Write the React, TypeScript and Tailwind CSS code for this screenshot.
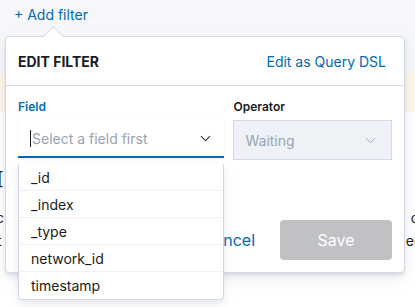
import { ChevronDown } from "lucide-react";

const fields = ["_id", "_index", "_type", "network_id", "timestamp"];

export default function App() {
  return (
    <div
      className="relative h-[307px] w-[415px] overflow-hidden bg-[#fafbfd] text-[14px] text-[#343741]"
      style={{ fontFamily: "Inter, 'Noto Sans', sans-serif" }}
    >
      {/* page behind */}
      <div className="h-[72px] bg-[#f5f7fa] px-[14px] pt-[4px]">
        <span className="text-[#006bb4]">+ Add filter</span>
      </div>
      <div className="h-[40px] bg-[#fef6e6]" />
      <div className="flex h-[195px] justify-between bg-white pt-[56px] text-[#1a1c21]">
        <div className="flex flex-col leading-[22px]">
          <span className="-ml-[3px] text-[18px] text-[#1a1c21]">[</span>
          <span className="-ml-[4px] mt-[17px]">c</span>
          <span className="-ml-[3px] mt-[1px]">t</span>
        </div>
        <div className="-mr-[7px] flex flex-col items-start pt-[39px] leading-[22px]">
          <span className="ml-[5px]">c</span>
          <span className="mt-[1px]">ec</span>
        </div>
      </div>

      {/* popover */}
      <div className="absolute left-[5px] top-[36px] w-[400px] rounded-[4px] border border-[#d3dae6] bg-white shadow-[0_6px_12px_-1px_rgba(152,162,179,0.25),0_2px_3px_rgba(152,162,179,0.2)]">
        <div className="absolute -top-[8px] left-[40px] h-[15px] w-[15px] rotate-45 border-l border-t border-[#d3dae6] bg-white" />
        <div className="relative flex h-[49px] items-center justify-between border-b border-[#d3dae6] px-[12px]">
          <span className="text-[14px] font-bold text-[#1a1c21]">EDIT FILTER</span>
          <span className="pr-[6px] text-[#006bb4]">Edit as Query DSL</span>
        </div>
        <div className="flex gap-[9px] px-[12px] pt-[12px]">
          <div className="flex w-[207px] flex-col">
            <span className="mb-[4px] text-[12px] font-semibold text-[#006bb4]">Field</span>
            <div className="flex h-[38px] items-center justify-between border-b-2 border-[#006bb4] bg-white pl-[12px] pr-[10px] shadow-[0_1px_2px_rgba(0,0,0,0.08)]">
              <span className="flex items-center text-[#98a2b3]">
                <span className="mr-px h-[17px] w-px bg-[#1a1c21]" />
                Select a field first
              </span>
              <ChevronDown size={17} strokeWidth={1.5} className="text-[#343741]" />
            </div>
          </div>
          <div className="flex w-[159px] flex-col">
            <span className="mb-[4px] text-[12px] font-semibold text-[#1a1c21]">Operator</span>
            <div className="flex h-[40px] items-center justify-between border border-[#d3dae6] bg-[#eef2f7] pl-[11px] pr-[12px]">
              <span className="text-[#98a2b3]">Waiting</span>
              <ChevronDown size={17} strokeWidth={1.25} className="text-[#98a2b3]" />
            </div>
          </div>
        </div>
        <div className="flex items-center justify-end gap-[25px] px-[12px] pb-[12px] pt-[60px]">
          <span className="text-[16px] text-[#006bb4]">Cancel</span>
          <div className="flex h-[40px] w-[112px] items-center justify-center rounded-[4px] bg-[#c0c1c4] text-[16px] text-white">
            Save
          </div>
        </div>
      </div>

      {/* dropdown list */}
      <div className="absolute left-[18px] top-[164px] w-[206px] rounded-b-[4px] border border-t-0 border-[#d3dae6] bg-white shadow-[0_4px_8px_rgba(152,162,179,0.25)]">
        {fields.map((f, i) => (
          <div
            key={f}
            className={`flex h-[27px] items-center px-[12px] text-[#1a1c21] ${
              i < fields.length - 1 ? "border-b border-[#eef2f7]" : ""
            }`}
          >
            {f}
          </div>
        ))}
      </div>
    </div>
  );
}
